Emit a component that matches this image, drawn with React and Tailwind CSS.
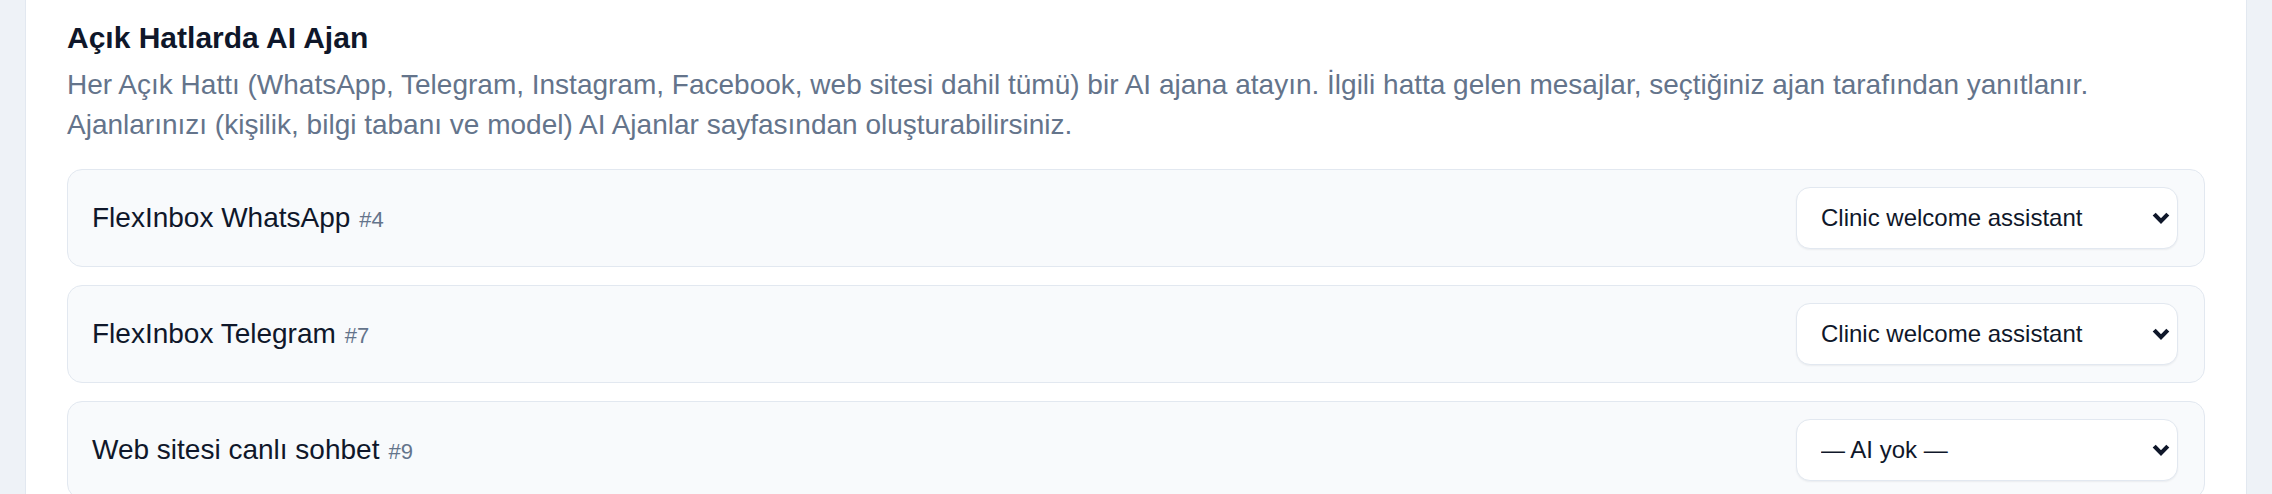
import React from 'react';

const lines = [
  { id: 4, name: 'FlexInbox WhatsApp', agent: 'clinic' },
  { id: 7, name: 'FlexInbox Telegram', agent: 'clinic' },
  { id: 9, name: 'Web sitesi canlı sohbet', agent: '' },
];

const AgentSelect = ({ value }) => (
  <div className="relative w-[382px] shrink-0">
    <select
      defaultValue={value}
      className="appearance-none w-full h-[62px] rounded-[14px] border border-[#e2e8f0] bg-white pl-[24px] pr-[40px] text-[24px] text-[#0f172a] shadow-[0_1px_2px_rgba(15,23,42,0.06)] outline-none"
    >
      <option value="">— AI yok —</option>
      <option value="clinic">Clinic welcome assistant</option>
    </select>
    <svg
      className="pointer-events-none absolute right-[8px] top-1/2 -translate-y-1/2"
      width="18"
      height="13"
      viewBox="0 0 18 13"
    >
      <path d="M2.2 2.6 L9 9.6 L15.8 2.6" fill="none" stroke="#0f172a" strokeWidth="4.2" />
    </svg>
  </div>
);

const LineRow = ({ line }) => (
  <div className="flex items-center justify-between rounded-[15px] border border-[#e2e8f0] bg-[#f8fafc] py-[17px] pl-[24px] pr-[26px]">
    <div className="flex items-baseline">
      <span className="text-[28px] text-[#0f172a]">{line.name}</span>
      <span className="ml-[9px] text-[22px] text-[#64748b]">#{line.id}</span>
    </div>
    <AgentSelect value={line.agent} />
  </div>
);

export default function App() {
  return (
    <div
      className="min-h-screen bg-[#eef2f7] px-[25px]"
      style={{ fontFamily: '"Liberation Sans", Arial, sans-serif' }}
    >
      <div className="min-h-screen bg-white border-x border-[#e2e8f0] px-[41px] pt-[18px] pb-10">
        <h2 className="text-[30px] leading-[40px] font-bold text-[#0f172a]">Açık Hatlarda AI Ajan</h2>
        <p className="mt-[7px] text-[28px] leading-[40px] text-[#64748b]">
          Her Açık Hattı (WhatsApp, Telegram, Instagram, Facebook, web sitesi dahil tümü) bir AI ajana atayın. İlgili hatta
          gelen mesajlar, seçtiğiniz ajan tarafından yanıtlanır. Ajanlarınızı (kişilik, bilgi tabanı ve model) AI Ajanlar
          sayfasından oluşturabilirsiniz.
        </p>
        <div className="mt-[24px] flex flex-col gap-[18px]">
          {lines.map((line) => (
            <LineRow key={line.id} line={line} />
          ))}
        </div>
      </div>
    </div>
  );
}
